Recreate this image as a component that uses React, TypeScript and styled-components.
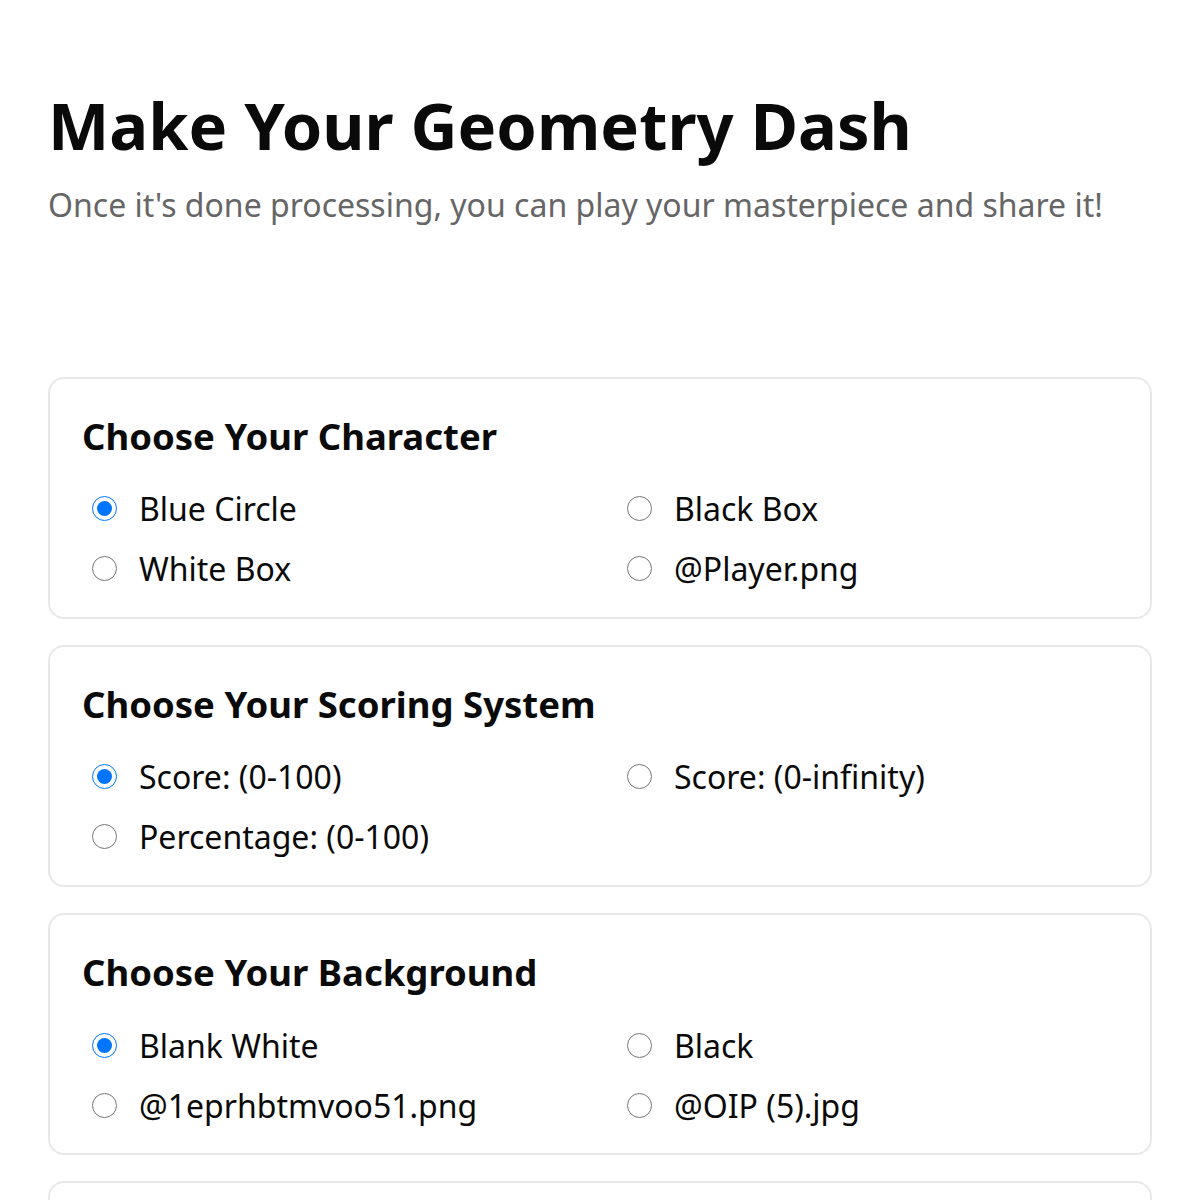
import React, { useState } from 'react';
import { createGlobalStyle, styled } from 'styled-components';

const GlobalStyle = createGlobalStyle`
  * { box-sizing: border-box; }
  body {
    margin: 0;
    background: #ffffff;
    font-family: "Noto Sans", "Open Sans", sans-serif;
    color: #0a0a0a;
  }
`;

const Page = styled.main`
  padding: 48px 48px 0;
`;

const Header = styled.header`
  padding-top: 38px;
  margin-bottom: 149px;
`;

const Title = styled.h1`
  margin: 0;
  font-size: 65px;
  font-weight: 700;
  line-height: 1.2;
  color: #0a0a0a;
`;

const Subtitle = styled.p`
  margin: 19px 0 0;
  font-size: 32px;
  line-height: 1.4;
  color: #666666;
`;

const Sections = styled.div`
  display: flex;
  flex-direction: column;
  gap: 26px;
`;

const Card = styled.section`
  border: 2px solid #e8e8e8;
  border-radius: 16px;
  padding: 32px 32px 18px;
`;

const CardTitle = styled.h2`
  margin: 0 0 17px;
  font-size: 36.5px;
  font-weight: 700;
  line-height: 1.4;
`;

const Options = styled.div`
  display: grid;
  grid-template-columns: 1fr 1fr;
  column-gap: 34px;
`;

const Option = styled.label`
  display: flex;
  align-items: center;
  gap: 22px;
  height: 60px;
  font-size: 32px;
  color: #0a0a0a;
  cursor: pointer;
`;

const Radio = styled.input`
  width: 25px;
  height: 25px;
  margin: 0 0 0 10px;
  accent-color: #0075ff;
`;

type Group = {
  name: string;
  title: string;
  options: string[];
};

const groups: Group[] = [
  { name: 'character', title: 'Choose Your Character', options: ['Blue Circle', 'Black Box', 'White Box', '@Player.png'] },
  { name: 'scoring', title: 'Choose Your Scoring System', options: ['Score: (0-100)', 'Score: (0-infinity)', 'Percentage: (0-100)'] },
  { name: 'background', title: 'Choose Your Background', options: ['Blank White', 'Black', '@1eprhbtmvoo51.png', '@OIP (5).jpg'] },
  { name: 'music', title: 'Choose Your Music', options: ['None', 'Stereo Madness'] },
];

const OptionGroup: React.FC<{ group: Group }> = ({ group }) => {
  const [value, setValue] = useState(group.options[0]);
  return (
    <Card>
      <CardTitle>{group.title}</CardTitle>
      <Options>
        {group.options.map((option) => (
          <Option key={option}>
            <Radio
              type="radio"
              name={group.name}
              checked={value === option}
              onChange={() => setValue(option)}
            />
            {option}
          </Option>
        ))}
      </Options>
    </Card>
  );
};

export default function App() {
  return (
    <>
      <GlobalStyle />
      <Page>
        <Header>
          <Title>Make Your Geometry Dash</Title>
          <Subtitle>Once it's done processing, you can play your masterpiece and share it!</Subtitle>
        </Header>
        <Sections>
          {groups.map((group) => (
            <OptionGroup key={group.name} group={group} />
          ))}
        </Sections>
      </Page>
    </>
  );
}
